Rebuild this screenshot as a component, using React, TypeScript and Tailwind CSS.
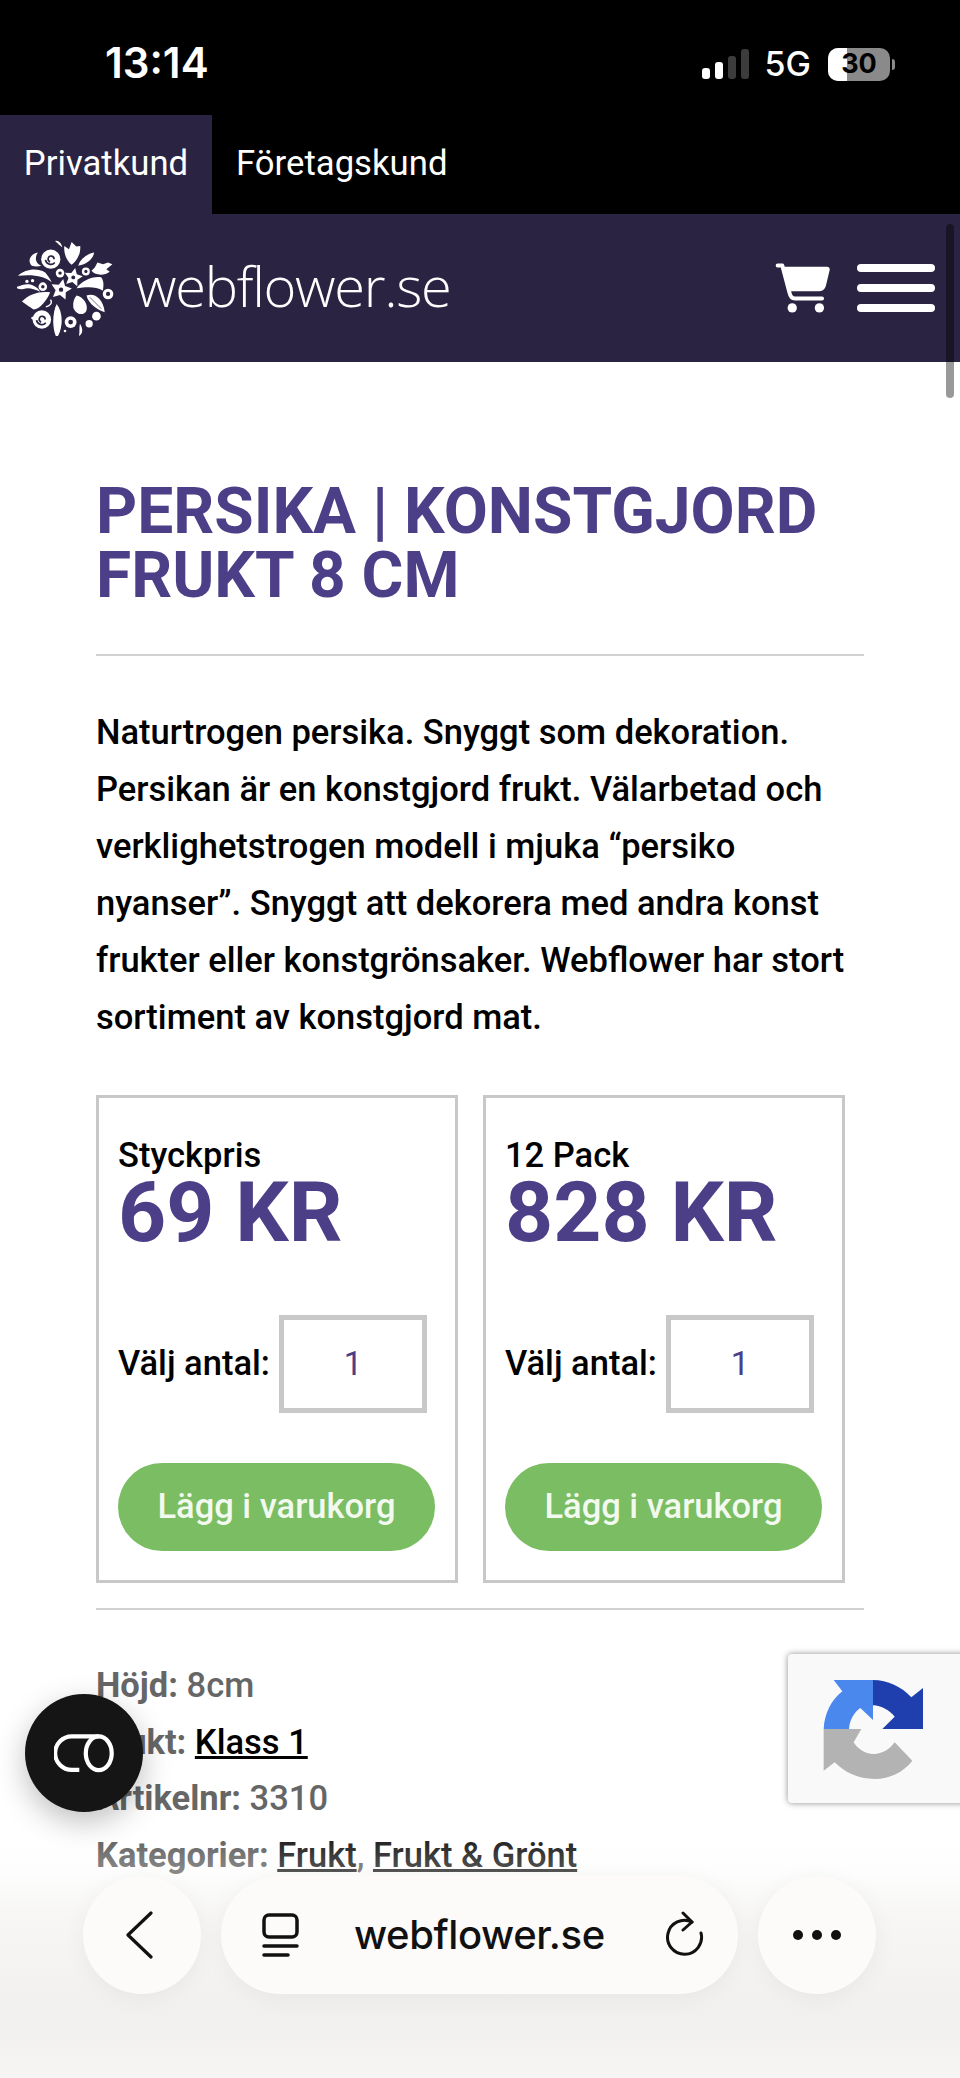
import type { ReactNode } from "react"

const roboto = "font-['Roboto',sans-serif]"
const bg = "#2a2342"

const starPoints = (cx: number, cy: number, r: number) =>
  Array.from({ length: 10 }, (_, i) => {
    const a = -Math.PI / 2 + (i * Math.PI) / 5 + 0.2
    const d = i % 2 === 0 ? r : r * 0.5
    return `${cx + d * Math.cos(a)},${cy + d * Math.sin(a)}`
  }).join(" ")

const Blossom = ({ x, y, r }: { x: number; y: number; r: number }) => (
  <>
    <circle cx={x} cy={y} r={r} fill="#fff" />
    <circle cx={x} cy={y} r={r * 0.4} fill={bg} />
  </>
)

const Star = ({ x, y, r }: { x: number; y: number; r: number }) => (
  <>
    <polygon points={starPoints(x, y, r)} fill="#fff" />
    <circle cx={x} cy={y} r={r * 0.2} fill={bg} />
  </>
)

// traced from the reference logo, coords are the 3x crop
const Logo = () => (
  <svg width="97" height="96" viewBox="25 22 293 290" fill="#fff">
    <path d="M168 40L182 50L190 28L204 42L216 40C218 65 205 85 190 97C175 85 165 62 168 40z" />
    <path d="M258 60C255 80 235 95 210 100C215 80 235 65 258 60z" />
    <path d="M313 95L300 90L285 95L268 90L260 105L250 115C262 130 290 130 305 118L295 110z" />
    <path d="M140 25C150 22 160 32 162 45C155 38 148 33 140 25z" />
    <path d="M88 60C65 65 55 85 70 100C80 103 90 102 100 100C85 95 75 80 88 60z" />
    <circle cx="127" cy="80" r="29" />
    <path d="M125 88a9 9 0 1 1 12-8M111 82c2 14 20 18 28 8" fill="none" stroke={bg} strokeWidth="5" />
    <path d="M28 130C50 110 85 105 110 120C118 128 125 140 130 150C110 130 70 125 28 130z" />
    <circle cx="55" cy="147" r="5" />
    <circle cx="72" cy="145" r="5" />
    <path d="M20 165C40 158 55 150 75 160C85 165 92 172 95 178C75 170 60 165 45 170C35 172 28 170 20 165z" />
    <Blossom x={103} y={163} r={13} />
    <Blossom x={155} y={122} r={13} />
    <Blossom x={233} y={117} r={12} />
    <Star x={195} y={135} r={29} />
    <Star x={158} y={172} r={33} />
    <path d="M205 168C220 145 255 130 280 135C290 150 285 165 285 175C260 160 230 165 205 168z" />
    <Blossom x={300} y={185} r={16} />
    <path d="M40 208C60 185 95 175 125 180C118 200 95 232 75 232L65 225L60 222z" />
    <path d="M112 224c12-2 22-12 14-22" fill="none" stroke="#fff" strokeWidth="4" />
    <path d="M205 190C225 195 240 215 235 235C225 255 200 245 195 225C193 210 198 198 205 190z" />
    <path d="M235 190C255 180 285 195 290 240C270 235 240 215 235 190z" />
    <path d="M245 195L280 230" fill="none" stroke={bg} strokeWidth="2" />
    <circle cx="100" cy="262" r="28" />
    <path d="M98 270a9 9 0 1 1 12-8M84 264c2 14 20 18 28 8" fill="none" stroke={bg} strokeWidth="5" />
    <path d="M145 215C165 240 165 290 145 318C130 290 132 240 145 215z" />
    <Blossom x={187} y={270} r={18} />
    <path d="M215 275C225 290 225 305 212 312C215 300 212 290 215 275z" />
    <circle cx="265" cy="252" r="13" />
    <circle cx="243" cy="275" r="11" />
    <circle cx="72" cy="258" r="4" />
    <circle cx="170" cy="297" r="4" />
  </svg>
)

const Cart = () => (
  <svg width="57" height="50" viewBox="45 65 172 150" fill="#fff">
    <path d="M56 72H70L92 155C94 165 98 172 108 172H190" fill="none" stroke="#fff" strokeWidth="12" strokeLinecap="round" strokeLinejoin="round" />
    <path d="M74 76H205C211 76 214 80 213 86L202 132C199 143 193 150 182 150H92z" />
    <circle cx="100" cy="200" r="14" />
    <circle cx="182" cy="200" r="14" />
  </svg>
)

const Recaptcha = () => (
  <svg width="100" height="100" viewBox="190 145 300 300">
    <path d="M222 148H340V268L302 232C283 245 270 268 268 295H192C194 250 214 208 248 182z" fill="#4a88ee" />
    <path d="M340 148C385 148 425 168 455 200L490 172V295H368L405 258C390 240 365 224 340 224z" fill="#1f3fae" />
    <path d="M192 295H305L282 335C295 355 315 370 342 370C368 370 390 356 405 335L458 390C430 425 390 445 345 445C295 445 255 425 225 395L192 420z" fill="#b3b3b3" />
  </svg>
)

const Round = ({ className, children }: { className: string; children: ReactNode }) => (
  <div className={`flex h-[118px] items-center rounded-full bg-[#fcfbf9] shadow-[0_4px_24px_rgba(0,0,0,0.05)] ${className}`}>
    {children}
  </div>
)

const PriceCard = ({ label, price }: { label: string; price: string }) => (
  <div className="flex h-[488px] w-[362px] flex-col border-[3px] border-[#c8c8c8] pt-[34px] pl-[19px]">
    <div className="text-[34.5px] leading-[46px] font-medium text-black">{label}</div>
    <div className="mt-[-8px] text-[84px] leading-[86px] font-bold text-[#4c3f87]">{price}</div>
    <div className="mt-[59px] flex h-[98px] items-center">
      <span className="w-[161px] shrink-0 text-[34.5px] font-medium text-black">Välj antal:</span>
      <div className="flex h-[98px] w-[148px] items-center justify-center border-[5px] border-[#c8c8c8] text-[33px] text-[#4c3f87]">
        1
      </div>
    </div>
    <button className="mt-[50px] h-[88px] w-[317px] rounded-full bg-[#7abd62] text-[34.5px] font-medium text-[#f2f9ee]">
      Lägg i varukorg
    </button>
  </div>
)

export default function App() {
  return (
    <div className={`relative h-[2078px] w-[960px] overflow-hidden bg-white ${roboto}`}>
      {/* Status bar */}
      <div className="flex h-[115px] items-start justify-between bg-black font-['Inter',sans-serif] text-white">
        <span className="mt-[39px] ml-[105px] text-[42px] leading-[48px] font-semibold">13:14</span>
        <div className="mt-[47px] mr-[65px] flex items-center">
          <div className="flex items-end gap-[5px]">
            <div className="h-[11px] w-[8px] rounded-[3px] bg-white" />
            <div className="h-[17px] w-[8px] rounded-[3px] bg-white" />
            <div className="h-[23px] w-[8px] rounded-[3px] bg-[#3c3c3c]" />
            <div className="h-[30px] w-[8px] rounded-[3px] bg-[#3c3c3c]" />
          </div>
          <span className="ml-[16px] text-[34px] leading-[34px] font-medium">5G</span>
          <div className="relative ml-[17px] flex h-[33px] w-[62px] items-center justify-center overflow-hidden rounded-[10px] bg-[#8a8a8a] text-[27px] font-bold text-black">
            <div className="absolute inset-y-0 left-0 w-[19px] bg-white" />
            <span className="relative">30</span>
          </div>
          <div className="ml-[2px] h-[11px] w-[3px] rounded-r-full bg-[#8a8a8a]" />
        </div>
      </div>

      {/* Customer tabs */}
      <div className="flex h-[99px] bg-black pb-[2px] text-[34.7px] text-white">
        <div className="mb-[-2px] flex w-[212px] items-center justify-center bg-[#2a2342] pb-[2px]">Privatkund</div>
        <div className="flex items-center pl-[24px]">Företagskund</div>
      </div>

      {/* Header */}
      <header className="flex h-[148px] items-center justify-between bg-[#2a2342] pr-[25px] pl-[17px]">
        <div className="flex items-center">
          <Logo />
          <span className="mt-[-6px] ml-[22px] font-['Open_Sans',sans-serif] text-[56px] leading-none font-[350] tracking-[-1.3px] text-white">
            webflower.se
          </span>
        </div>
        <div className="flex items-center gap-[26px]">
          <Cart />
          <div className="flex w-[78px] flex-col gap-[12px]">
            <div className="h-[8px] rounded-full bg-white" />
            <div className="h-[8px] rounded-full bg-white" />
            <div className="h-[8px] rounded-full bg-white" />
          </div>
        </div>
      </header>

      {/* Product */}
      <main className="px-[96px] pt-[118px]">
        <h1 className="text-[64px] leading-[64px] font-bold text-[#4c3f87]">
          PERSIKA | KONSTGJORD
          <br />
          FRUKT 8 CM
        </h1>
        <div className="mt-[46px] h-[2px] bg-[#d2d2d2]" />
        <p className="mt-[48px] w-[768px] text-[34.5px] leading-[57px] font-medium text-black">
          Naturtrogen persika. Snyggt som dekoration.
          <br />
          Persikan är en konstgjord frukt. Välarbetad och
          <br />
          verklighetstrogen modell i mjuka “persiko
          <br />
          nyanser”. Snyggt att dekorera med andra konst
          <br />
          frukter eller konstgrönsaker. Webflower har stort
          <br />
          sortiment av konstgjord mat.
        </p>
        <div className="mt-[49px] flex gap-[25px]">
          <PriceCard label="Styckpris" price="69 KR" />
          <PriceCard label="12 Pack" price="828 KR" />
        </div>
        <div className="mt-[25px] h-[2px] bg-[#d2d2d2]" />
        <div className="mt-[47px] text-[34.5px] leading-[56.6px] font-medium text-[#666]">
          <div>
            <b className="font-bold">Höjd:</b> 8cm
          </div>
          <div>
            <b className="font-bold">Frukt:</b> <u className="text-black">Klass 1</u>
          </div>
          <div>
            <b className="font-bold">Artikelnr:</b> 3310
          </div>
          <div>
            <b className="font-bold">Kategorier:</b> <u className="text-[#222]">Frukt</u>, <u className="text-[#222]">Frukt &amp; Grönt</u>
          </div>
        </div>
      </main>

      {/* Scrollbar */}
      <div className="absolute top-[224px] right-[6px] h-[174px] w-[8px] rounded-full bg-[#000]/40" />

      {/* reCAPTCHA badge */}
      <div className="absolute top-[1654px] left-[788px] flex h-[149px] w-[190px] items-center rounded-l-[4px] bg-[#f9f9f9] pl-[35px] shadow-[0_0_6px_rgba(0,0,0,0.45)]">
        <Recaptcha />
      </div>

      {/* Browser bar fade */}
      <div className="absolute inset-x-0 bottom-0 h-[238px] bg-[linear-gradient(to_bottom,rgba(248,247,246,0)_0%,rgba(248,247,246,0.25)_14%,rgba(247,246,245,0.97)_32%,#f1f0ef_75%,#f6f5f4_100%)]" />

      {/* Floating action */}
      <div className="absolute top-[1694px] left-[25px] flex h-[118px] w-[118px] items-center justify-center rounded-full bg-[#151515] shadow-[0_10px_30px_rgba(0,0,0,0.25)]">
        <svg width="60" height="40" viewBox="100 145 185 122" fill="none" stroke="#fff" strokeWidth="13">
          <path d="M178 258H155a51 51 0 0 1 0-103H238" />
          <ellipse cx="238" cy="207" rx="40" ry="52" />
        </svg>
      </div>

      {/* Browser bar */}
      <div className="absolute top-[1876px] left-[83px] flex items-center gap-[20px]">
        <Round className="w-[118px] justify-center">
          <svg className="mr-[6px]" width="28" height="48" viewBox="0 0 28 48" fill="none" stroke="#111" strokeWidth="3.2" strokeLinecap="round" strokeLinejoin="round">
            <path d="M26 2L3 24L26 46" />
          </svg>
        </Round>
        <Round className="w-[517px] pr-[32px] pl-[41px]">
          <svg width="37" height="44" viewBox="0 0 37 44" fill="none" stroke="#111" strokeWidth="3.5" strokeLinecap="round">
            <rect x="2" y="2" width="33" height="22" rx="5" />
            <path d="M2 33h33M2 42h24" />
          </svg>
          <span className="ml-[55px] font-['Inter',sans-serif] text-[40px] font-medium tracking-[-0.4px] text-[#111]">
            webflower.se
          </span>
          <svg className="ml-auto" width="40" height="48" viewBox="0 0 40 46" fill="none" stroke="#111" strokeWidth="3" strokeLinecap="round" strokeLinejoin="round">
            <path d="M26 10A17 17 0 1 0 35 21" />
            <path d="M17 1l9 9-9 8" />
          </svg>
        </Round>
        <Round className="w-[118px] justify-center gap-[9px]">
          <div className="h-[10px] w-[10px] rounded-full bg-[#111]" />
          <div className="h-[10px] w-[10px] rounded-full bg-[#111]" />
          <div className="h-[10px] w-[10px] rounded-full bg-[#111]" />
        </Round>
      </div>
    </div>
  )
}
